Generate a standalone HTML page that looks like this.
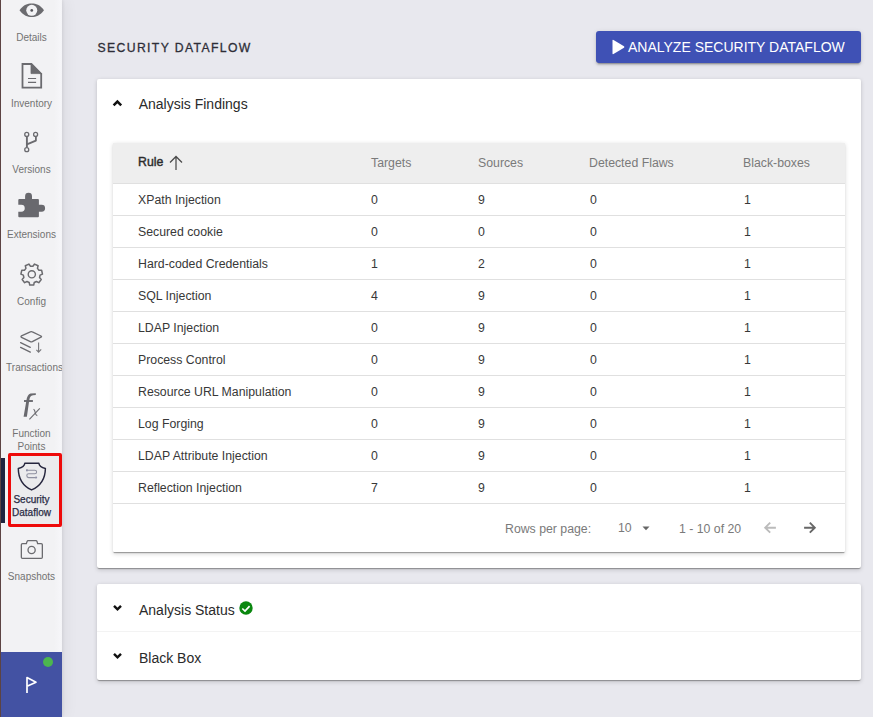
<!DOCTYPE html>
<html><head><meta charset="utf-8">
<style>
*{box-sizing:border-box}
html,body{margin:0;padding:0}
body{width:873px;height:717px;overflow:hidden;position:relative;background:#e8e8ee;font-family:"Liberation Sans",sans-serif;color:#333}
.abs{position:absolute}
#side{position:absolute;left:0;top:0;width:62px;height:717px;background:linear-gradient(to right,#f2f2f4 0,#f2f2f4 54px,#f6f6f9 61px,#f3f3f6 62px);box-shadow:1px 0 3px rgba(0,0,0,.07),3px 0 14px rgba(0,0,0,.06);overflow:hidden}
.lbl{position:absolute;left:1px;width:61px;text-align:center;font-size:10px;line-height:13px;color:#727272;white-space:nowrap}
.t12{font-size:12.3px;line-height:14px;white-space:nowrap}
.card{position:absolute;background:#fff;box-shadow:0 2px 1px -1px rgba(0,0,0,.2),0 1px 1px 0 rgba(0,0,0,.14),0 1.5px 4px 0 rgba(0,0,0,.16);border-radius:2px}
.row{position:absolute;left:0;width:732px;height:32px;border-top:1px solid #e0e0e0}
.row div{position:absolute;top:8.5px;font-size:12.3px;line-height:14px;color:#383838;white-space:nowrap}
.c0{left:25px}.c1{left:258px}.c2{left:365px}.c3{left:477px}.c4{left:631px}
.hd{position:absolute;font-size:12.3px;line-height:14px;color:#7a7a7a;white-space:nowrap}
</style></head>
<body>
<div id="side">
  <div class="abs" style="left:0;top:0;width:1px;height:717px;background:#5c4343;z-index:5"></div>
  <!-- Details eye -->
  <svg class="abs" style="left:16px;top:0" width="32" height="20" viewBox="0 0 32 20">
    <path d="M3.5 10.2 C8 4.6 11.2 3.5 15.75 3.5 S23.5 4.6 28 10.2 C23.5 15.8 20.3 16.9 15.75 16.9 S8 15.8 3.5 10.2Z" fill="#6b6b6f"/>
    <circle cx="15.75" cy="10.3" r="5.5" fill="#f2f2f4"/>
    <circle cx="15.75" cy="10.4" r="1.35" fill="#55555a"/>
  </svg>
  <div class="lbl" style="top:31.2px">Details</div>

  <!-- Inventory doc -->
  <svg class="abs" style="left:18px;top:60px" width="28" height="32" viewBox="0 0 28 32">
    <path d="M4.5 4 H13.4 L23.2 13.8 V27.7 H4.5 Z" fill="none" stroke="#6b6b6f" stroke-width="1.8"/>
    <path d="M13 3.1 L24.1 14.2 V13.4 H13 Z" fill="#6b6b6f"/>
    <path d="M13 3.3 V13.6 H24" fill="none" stroke="#6b6b6f" stroke-width="0.8"/>
    <path d="M10 18.5 H18.1 M10 22.3 H18.1" stroke="#6b6b6f" stroke-width="1.2"/>
  </svg>
  <div class="lbl" style="top:97.0px">Inventory</div>

  <!-- Versions branch -->
  <svg class="abs" style="left:20px;top:128px" width="24" height="28" viewBox="0 0 24 28">
    <path d="M6.9 8.8 V19.5" stroke="#6b6b6f" stroke-width="1.9" fill="none"/>
    <path d="M15.9 8.8 V12.6 L6.9 16.4" stroke="#6b6b6f" stroke-width="1.8" fill="none" stroke-linejoin="round"/>
    <circle cx="6.75" cy="6.45" r="2" fill="none" stroke="#6b6b6f" stroke-width="1.3"/>
    <circle cx="15.6" cy="6.45" r="2" fill="none" stroke="#6b6b6f" stroke-width="1.3"/>
    <circle cx="6.75" cy="21.7" r="2" fill="none" stroke="#6b6b6f" stroke-width="1.3"/>
  </svg>
  <div class="lbl" style="top:163.4px">Versions</div>

  <!-- Extensions puzzle -->
  <svg class="abs" style="left:14px;top:188px" width="36" height="34" viewBox="0 0 36 34">
    <path d="M5.3 11 H11.1 V8.2 A3.45 3.45 0 0 1 18 8.2 V11 H24 Q24.9 11 24.9 11.9 V16.8 H27.65 A3.45 3.45 0 0 1 27.65 23.7 H24.9 V28.3 Q24.9 29.2 24 29.2 H5.2 Q4.3 29.2 4.3 28.3 V23.7 H7.3 A3.45 3.45 0 0 0 7.3 16.8 H4.3 V11.9 Q4.3 11 5.3 11 Z" fill="#69696e"/>
  </svg>
  <div class="lbl" style="top:228.4px">Extensions</div>

  <!-- Config gear -->
  <svg class="abs" style="left:18px;top:260px" width="28" height="30" viewBox="0 0 28 30">
    <path d="M16.23 22.51 L15.67 25.12 L11.73 25.12 L11.17 22.51 L9.01 21.47 L6.62 22.66 L4.17 19.58 L5.86 17.52 L5.33 15.18 L2.91 14.06 L3.79 10.22 L6.45 10.25 L7.95 8.38 L7.32 5.79 L10.87 4.08 L12.50 6.19 L14.90 6.19 L16.53 4.08 L20.08 5.79 L19.45 8.38 L20.95 10.25 L23.61 10.22 L24.49 14.06 L22.07 15.18 L21.54 17.52 L23.23 19.58 L20.78 22.66 L18.39 21.47 Z" fill="none" stroke="#6b6b6f" stroke-width="1.5" stroke-linejoin="round"/>
    <circle cx="13.8" cy="14.3" r="3.6" fill="none" stroke="#6b6b6f" stroke-width="1.4"/>
  </svg>
  <div class="lbl" style="top:295.3px">Config</div>

  <!-- Transactions -->
  <svg class="abs" style="left:16px;top:326px" width="30" height="30" viewBox="0 0 30 30">
    <path d="M5.5 9.8 L14.3 5.9 Q15.3 5.4 16.3 5.9 L25 10 Q26.1 10.6 25 11.2 L16.3 15.6 Q15.3 16.1 14.3 15.6 L5.5 11.4 Q4.4 10.6 5.5 9.8Z" fill="none" stroke="#6b6b6f" stroke-width="1.3" stroke-linejoin="round"/>
    <path d="M4.6 16.6 L14.3 21.3 M4.6 21.4 L14.3 26.1" stroke="#6b6b6f" stroke-width="1.3" stroke-linecap="round"/>
    <path d="M22.6 16.5 V26.2 M20.4 23.8 L22.6 26.2 L25.2 23.4" stroke="#77777b" stroke-width="1.1" fill="none"/>
  </svg>
  <div class="lbl" style="top:361.1px;left:4px">Transactions</div>

  <!-- Function points fx -->
  <svg class="abs" style="left:18px;top:388px" width="28" height="34" viewBox="0 0 28 34">
    <path d="M5.6 28.8 L8.4 12.5 Q9.3 6.6 12.5 5.6 Q14 5.2 17.8 5.2 L17.8 7.1 Q14.5 7.1 13 7.9 Q11.6 8.9 11.2 12.5 L8.9 28.8 Z" fill="#69696e"/>
    <path d="M6 13 H14.9" stroke="#69696e" stroke-width="1.9"/>
    <path d="M11.4 31.4 L21.8 20.3" stroke="#6b6b6f" stroke-width="1.1"/>
    <path d="M15.6 21.2 Q16.8 22.2 17.3 24.8 Q17.8 27.4 19.3 27.6" fill="none" stroke="#6b6b6f" stroke-width="1.1"/>
  </svg>
  <div class="lbl" style="top:427.2px">Function</div>
  <div class="lbl" style="top:440.4px">Points</div>

  <!-- Security Dataflow active -->
  <div class="abs" style="left:1px;top:458px;width:4px;height:65px;background:#20243f"></div>
  <div class="abs" style="left:8px;top:453px;width:54px;height:74px;border:3px solid #ee0a0a;background:#ebebed;border-radius:2px"></div>
  <svg class="abs" style="left:14.4px;top:457.6px" width="34" height="36" viewBox="0 0 34 36">
    <path d="M10.8 5.3 H24.9 Q25.3 8.8 31.4 10.5 Q31.2 26 17.6 31.9 Q4.4 26 4.3 10.5 Q10.4 8.8 10.8 5.3Z" fill="none" stroke="#26263e" stroke-width="1.45" stroke-linejoin="round"/>
    <path d="M13 12.3 H20.8 Q22.6 12.3 22.6 14 Q22.6 15.8 20.8 15.8 H14.6 Q12.8 15.8 12.8 17.6 Q12.8 19.6 14.6 19.6 H21.8" stroke="#8e90a0" stroke-width="1.1" fill="none"/>
    <rect x="12" y="11.3" width="1.8" height="2" fill="#8f90a8"/>
    <circle cx="22.1" cy="19.5" r="1.1" fill="#8f90a8"/>
  </svg>
  <div class="lbl" style="top:492.5px;color:#2a2b45;-webkit-text-stroke:0.25px #2a2b45">Security</div>
  <div class="lbl" style="top:505.5px;color:#2a2b45;-webkit-text-stroke:0.25px #2a2b45">Dataflow</div>

  <!-- Snapshots camera -->
  <svg class="abs" style="left:16px;top:536px" width="32" height="26" viewBox="0 0 32 26">
    <path d="M6.5 7.55 H10.4 L11 5.6 Q11.3 4.65 12.2 4.65 H19.9 Q20.8 4.65 21.1 5.6 L21.6 7.55 H25.2 Q26.35 7.55 26.35 8.7 V21.2 Q26.35 22.35 25.2 22.35 H6.5 Q5.35 22.35 5.35 21.2 V8.7 Q5.35 7.55 6.5 7.55 Z" fill="none" stroke="#6b6b6f" stroke-width="1.3"/>
    <circle cx="15.6" cy="14" r="3.6" fill="none" stroke="#6b6b6f" stroke-width="1.3"/>
  </svg>
  <div class="lbl" style="top:570.0px">Snapshots</div>

  <!-- bottom block -->
  <div class="abs" style="left:1px;top:652px;width:61px;height:65px;background:#4352a3"></div>
  <div class="abs" style="left:42.8px;top:656.8px;width:10.4px;height:10.4px;border-radius:50%;background:#4cb64f"></div>
  <svg class="abs" style="left:18px;top:670px" width="26" height="26" viewBox="0 0 26 26">
    <path d="M9 23 V7.6 L18 12.2 L9 16.3" fill="none" stroke="#fff" stroke-width="1.7" stroke-linejoin="round"/>
  </svg>
</div>

<!-- title -->
<div class="abs" style="left:97.5px;top:40.8px;font-size:12.2px;line-height:14px;letter-spacing:1.38px;color:#2e2e38;-webkit-text-stroke:0.3px #2e2e38">SECURITY DATAFLOW</div>

<!-- button -->
<div class="abs" style="left:596px;top:31px;width:265px;height:32px;background:#3f51b5;border-radius:3px;box-shadow:0 3px 1px -2px rgba(0,0,0,.2),0 2px 2px 0 rgba(0,0,0,.14),0 1px 5px 0 rgba(0,0,0,.12)">
  <svg class="abs" style="left:15px;top:8px" width="14" height="16" viewBox="0 0 14 16"><path d="M1.5 1.5 Q1.5 0.5 2.5 1 L13 7.3 Q13.8 8 13 8.7 L2.5 15 Q1.5 15.5 1.5 14.5Z" fill="#fff"/></svg>
  <div class="abs" style="left:32px;top:8px;font-size:14px;line-height:16px;color:#fff;white-space:nowrap">ANALYZE SECURITY DATAFLOW</div>
</div>

<!-- card 1 -->
<div class="card" style="left:97px;top:79px;width:764px;height:489px">
  <svg class="abs" style="left:14px;top:19px" width="14" height="10" viewBox="0 0 14 10"><path d="M2.6 7.4 L6.4 3.6 L10.2 7.4" fill="none" stroke="#111" stroke-width="2.5"/></svg>
  <div class="abs" style="left:41.7px;top:17px;font-size:14px;line-height:16px;color:#2a2a2a;white-space:nowrap">Analysis Findings</div>

  <!-- inner table card -->
  <div class="card" style="left:16px;top:64px;width:732px;height:409px;border-radius:1px">
    <div class="abs" style="left:0;top:0;width:732px;height:40px;background:#eeeeee"></div>
    <div class="abs" style="left:25px;top:12.3px;font-size:12.3px;line-height:14px;color:#2b2b2b;-webkit-text-stroke:0.4px #2b2b2b">Rule</div>
    <svg class="abs" style="left:55px;top:11px" width="16" height="17" viewBox="0 0 16 17"><path d="M8 16 V2.5 M2 8.5 L8 2.5 L14 8.5" fill="none" stroke="#4a4a4a" stroke-width="1.25"/></svg>
    <div class="hd" style="left:258px;top:13px">Targets</div>
    <div class="hd" style="left:365px;top:13px">Sources</div>
    <div class="hd" style="left:476px;top:13px">Detected Flaws</div>
    <div class="hd" style="left:630px;top:13px">Black-boxes</div>

    <div class="row" style="top:40px"><div class="c0">XPath Injection</div><div class="c1">0</div><div class="c2">9</div><div class="c3">0</div><div class="c4">1</div></div>
    <div class="row" style="top:72px"><div class="c0">Secured cookie</div><div class="c1">0</div><div class="c2">0</div><div class="c3">0</div><div class="c4">1</div></div>
    <div class="row" style="top:104px"><div class="c0">Hard-coded Credentials</div><div class="c1">1</div><div class="c2">2</div><div class="c3">0</div><div class="c4">1</div></div>
    <div class="row" style="top:136px"><div class="c0">SQL Injection</div><div class="c1">4</div><div class="c2">9</div><div class="c3">0</div><div class="c4">1</div></div>
    <div class="row" style="top:168px"><div class="c0">LDAP Injection</div><div class="c1">0</div><div class="c2">9</div><div class="c3">0</div><div class="c4">1</div></div>
    <div class="row" style="top:200px"><div class="c0">Process Control</div><div class="c1">0</div><div class="c2">9</div><div class="c3">0</div><div class="c4">1</div></div>
    <div class="row" style="top:232px"><div class="c0">Resource URL Manipulation</div><div class="c1">0</div><div class="c2">9</div><div class="c3">0</div><div class="c4">1</div></div>
    <div class="row" style="top:264px"><div class="c0">Log Forging</div><div class="c1">0</div><div class="c2">9</div><div class="c3">0</div><div class="c4">1</div></div>
    <div class="row" style="top:296px"><div class="c0">LDAP Attribute Injection</div><div class="c1">0</div><div class="c2">9</div><div class="c3">0</div><div class="c4">1</div></div>
    <div class="row" style="top:328px"><div class="c0">Reflection Injection</div><div class="c1">7</div><div class="c2">9</div><div class="c3">0</div><div class="c4">1</div></div>
    <div class="row" style="top:360px;height:49px"></div>

    <div class="hd" style="left:392px;top:378.8px">Rows per page:</div>
    <div class="hd" style="left:505px;top:377.8px">10</div>
    <svg class="abs" style="left:529px;top:383px" width="8" height="5" viewBox="0 0 8 5"><path d="M0.5 0.5 H7.5 L4 4.2Z" fill="#666"/></svg>
    <div class="hd" style="left:566px;top:378.5px">1 - 10 of 20</div>
    <svg class="abs" style="left:648px;top:378px" width="16" height="16" viewBox="0 0 16 16"><path d="M14.9 6.7 H4.2 M9.2 1.7 L4.2 6.7 L9.2 11.7" fill="none" stroke="#bbbbbb" stroke-width="1.9"/></svg>
    <svg class="abs" style="left:689px;top:378px" width="16" height="16" viewBox="0 0 16 16"><path d="M2.1 6.7 H12.8 M7.8 1.7 L12.8 6.7 L7.8 11.7" fill="none" stroke="#676767" stroke-width="1.9"/></svg>
  </div>
</div>

<!-- card 2 -->
<div class="card" style="left:97px;top:584px;width:764px;height:96px">
  <svg class="abs" style="left:14px;top:19px" width="14" height="10" viewBox="0 0 14 10"><path d="M3 2.8 L6.5 6.3 L10 2.8" fill="none" stroke="#111" stroke-width="2.4"/></svg>
  <div class="abs" style="left:42px;top:18px;font-size:14px;line-height:16px;color:#2a2a2a;white-space:nowrap">Analysis Status</div>
  <svg class="abs" style="left:141px;top:15.7px" width="16" height="16" viewBox="0 0 16 16"><circle cx="8" cy="8" r="6.7" fill="#0a870f"/><path d="M4.3 8.5 L7 11 L11.6 6.1" fill="none" stroke="#fff" stroke-width="1.7"/></svg>
  <div class="abs" style="left:0;top:47px;width:764px;height:1px;background:#f3f3f3"></div>
  <svg class="abs" style="left:14px;top:67px" width="14" height="10" viewBox="0 0 14 10"><path d="M3 2.8 L6.5 6.3 L10 2.8" fill="none" stroke="#111" stroke-width="2.4"/></svg>
  <div class="abs" style="left:42px;top:66px;font-size:14px;line-height:16px;color:#2a2a2a;white-space:nowrap">Black Box</div>
</div>


</body></html>
